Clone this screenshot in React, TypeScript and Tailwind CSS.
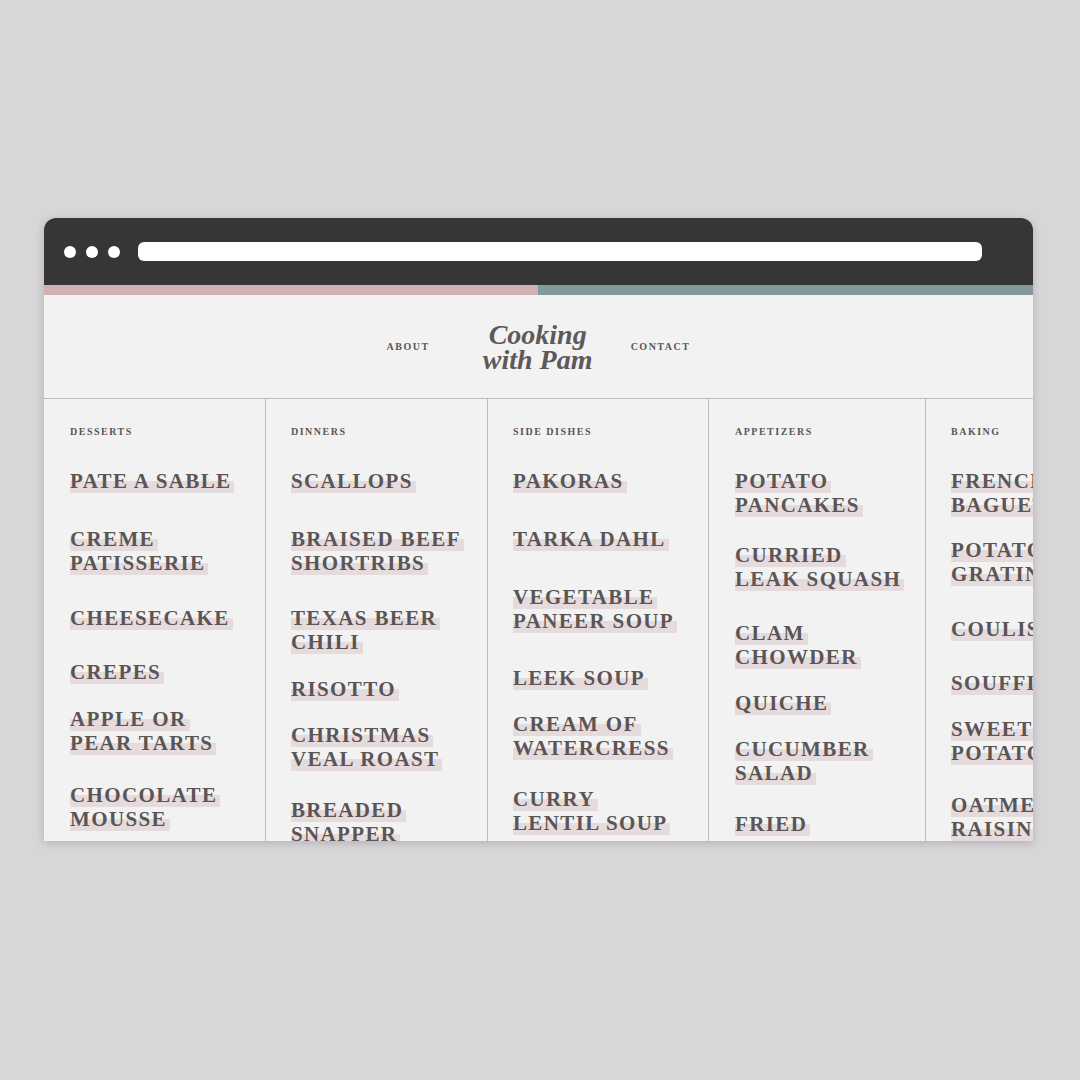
import React from 'react';

type Item = { lines: string[]; mt: string };
type Column = { title: string; width: string; pad: string; items: Item[] };

const serif = { fontFamily: '"Liberation Serif", "Times New Roman", serif' };

const columns: Column[] = [
  {
    title: 'Desserts',
    width: 'w-[222px] border-r',
    pad: 'pl-[26px]',
    items: [
      { lines: ['Pate a sable'], mt: 'mt-0' },
      { lines: ['Creme', 'Patisserie'], mt: 'mt-[34px]' },
      { lines: ['Cheesecake'], mt: 'mt-[31px]' },
      { lines: ['Crepes'], mt: 'mt-[30px]' },
      { lines: ['Apple or', 'pear tarts'], mt: 'mt-[23px]' },
      { lines: ['Chocolate', 'mousse'], mt: 'mt-[28px]' },
    ],
  },
  {
    title: 'Dinners',
    width: 'w-[222px] border-r',
    pad: 'pl-[25px]',
    items: [
      { lines: ['Scallops'], mt: 'mt-0' },
      { lines: ['Braised beef', 'shortribs'], mt: 'mt-[34px]' },
      { lines: ['Texas beer', 'chili'], mt: 'mt-[31px]' },
      { lines: ['Risotto'], mt: 'mt-[23px]' },
      { lines: ['Christmas', 'veal roast'], mt: 'mt-[22px]' },
      { lines: ['Breaded', 'snapper'], mt: 'mt-[27px]' },
    ],
  },
  {
    title: 'Side dishes',
    width: 'w-[221px] border-r',
    pad: 'pl-[25px]',
    items: [
      { lines: ['Pakoras'], mt: 'mt-0' },
      { lines: ['Tarka dahl'], mt: 'mt-[34px]' },
      { lines: ['Vegetable', 'paneer soup'], mt: 'mt-[34px]' },
      { lines: ['Leek soup'], mt: 'mt-[33px]' },
      { lines: ['Cream of', 'watercress'], mt: 'mt-[22px]' },
      { lines: ['Curry', 'lentil soup'], mt: 'mt-[27px]' },
    ],
  },
  {
    title: 'Appetizers',
    width: 'w-[217px] border-r',
    pad: 'pl-[26px]',
    items: [
      { lines: ['Potato', 'pancakes'], mt: 'mt-0' },
      { lines: ['Curried', 'leak squash'], mt: 'mt-[26px]' },
      { lines: ['Clam', 'chowder'], mt: 'mt-[30px]' },
      { lines: ['Quiche'], mt: 'mt-[22px]' },
      { lines: ['Cucumber', 'salad'], mt: 'mt-[22px]' },
      { lines: ['Fried', 'calamari'], mt: 'mt-[27px]' },
    ],
  },
  {
    title: 'Baking',
    width: 'w-[217px]',
    pad: 'pl-[25px]',
    items: [
      { lines: ['French', 'baguette'], mt: 'mt-0' },
      { lines: ['Potato', 'gratin'], mt: 'mt-[21px]' },
      { lines: ['Coulis'], mt: 'mt-[31px]' },
      { lines: ['Souffle'], mt: 'mt-[30px]' },
      { lines: ['Sweet', 'potato pie'], mt: 'mt-[22px]' },
      { lines: ['Oatmeal', 'raisin'], mt: 'mt-[28px]' },
    ],
  },
];

const Recipe: React.FC<{ item: Item }> = ({ item }) => (
  <div className={item.mt}>
    {item.lines.map((line) => (
      <div key={line} className="h-[24px] whitespace-nowrap">
        <span className="inline-block pr-[3px] text-[21px] leading-[24px] font-bold uppercase tracking-[0.065em] text-[#5b5555] bg-[linear-gradient(to_bottom,transparent_50%,#e6dbdc_50%)]">
          {line}
        </span>
      </div>
    ))}
  </div>
);

const App: React.FC = () => {
  return (
    <div className="w-[1080px] h-[1080px] bg-[#d8d6d9] pt-[218px] pl-[44px]" style={serif}>
      <div className="w-[989px] h-[623px] rounded-t-[12px] overflow-hidden bg-[#f2f2f2] flex flex-col shadow-[0_2px_10px_rgba(0,0,0,0.18)]">
        {/* browser chrome */}
        <div className="h-[67px] shrink-0 bg-[#363636] flex items-center pl-[20px] pr-[51px]">
          <div className="flex gap-[10px]">
            <span className="w-[12px] h-[12px] rounded-full bg-white" />
            <span className="w-[12px] h-[12px] rounded-full bg-white" />
            <span className="w-[12px] h-[12px] rounded-full bg-white" />
          </div>
          <div className="ml-[18px] flex-1 h-[19px] rounded-[6px] bg-white" />
        </div>
        <div className="h-[10px] shrink-0 flex">
          <div className="w-[494px] bg-[#d1b0b1]" />
          <div className="flex-1 bg-[#849999]" />
        </div>

        {/* header */}
        <header className="h-[104px] shrink-0 border-b border-[#bcbcbc] flex items-center justify-center text-[#5b5555]">
          <a className="mr-[52px] text-[10px] leading-[12px] font-bold tracking-[0.15em] uppercase">About</a>
          <div className="w-[112px] text-center whitespace-nowrap italic font-bold text-[28px] leading-[25px] text-[#5e5959]">
            Cooking
            <br />
            with Pam
          </div>
          <a className="ml-[37px] text-[10px] leading-[12px] font-bold tracking-[0.15em] uppercase">Contact</a>
        </header>

        {/* recipe columns */}
        <div className="flex-1 min-h-0 flex overflow-hidden">
          {columns.map((col) => (
            <section key={col.title} className={`${col.width} shrink-0 border-[#bcbcbc] ${col.pad} pt-[27px] overflow-hidden`}>
              <h2 className="mb-[31px] text-[10px] leading-[12px] font-bold tracking-[0.15em] uppercase text-[#5b5555]">
                {col.title}
              </h2>
              {col.items.map((item) => (
                <Recipe key={item.lines.join(' ')} item={item} />
              ))}
            </section>
          ))}
        </div>
      </div>
    </div>
  );
};

export default App;
